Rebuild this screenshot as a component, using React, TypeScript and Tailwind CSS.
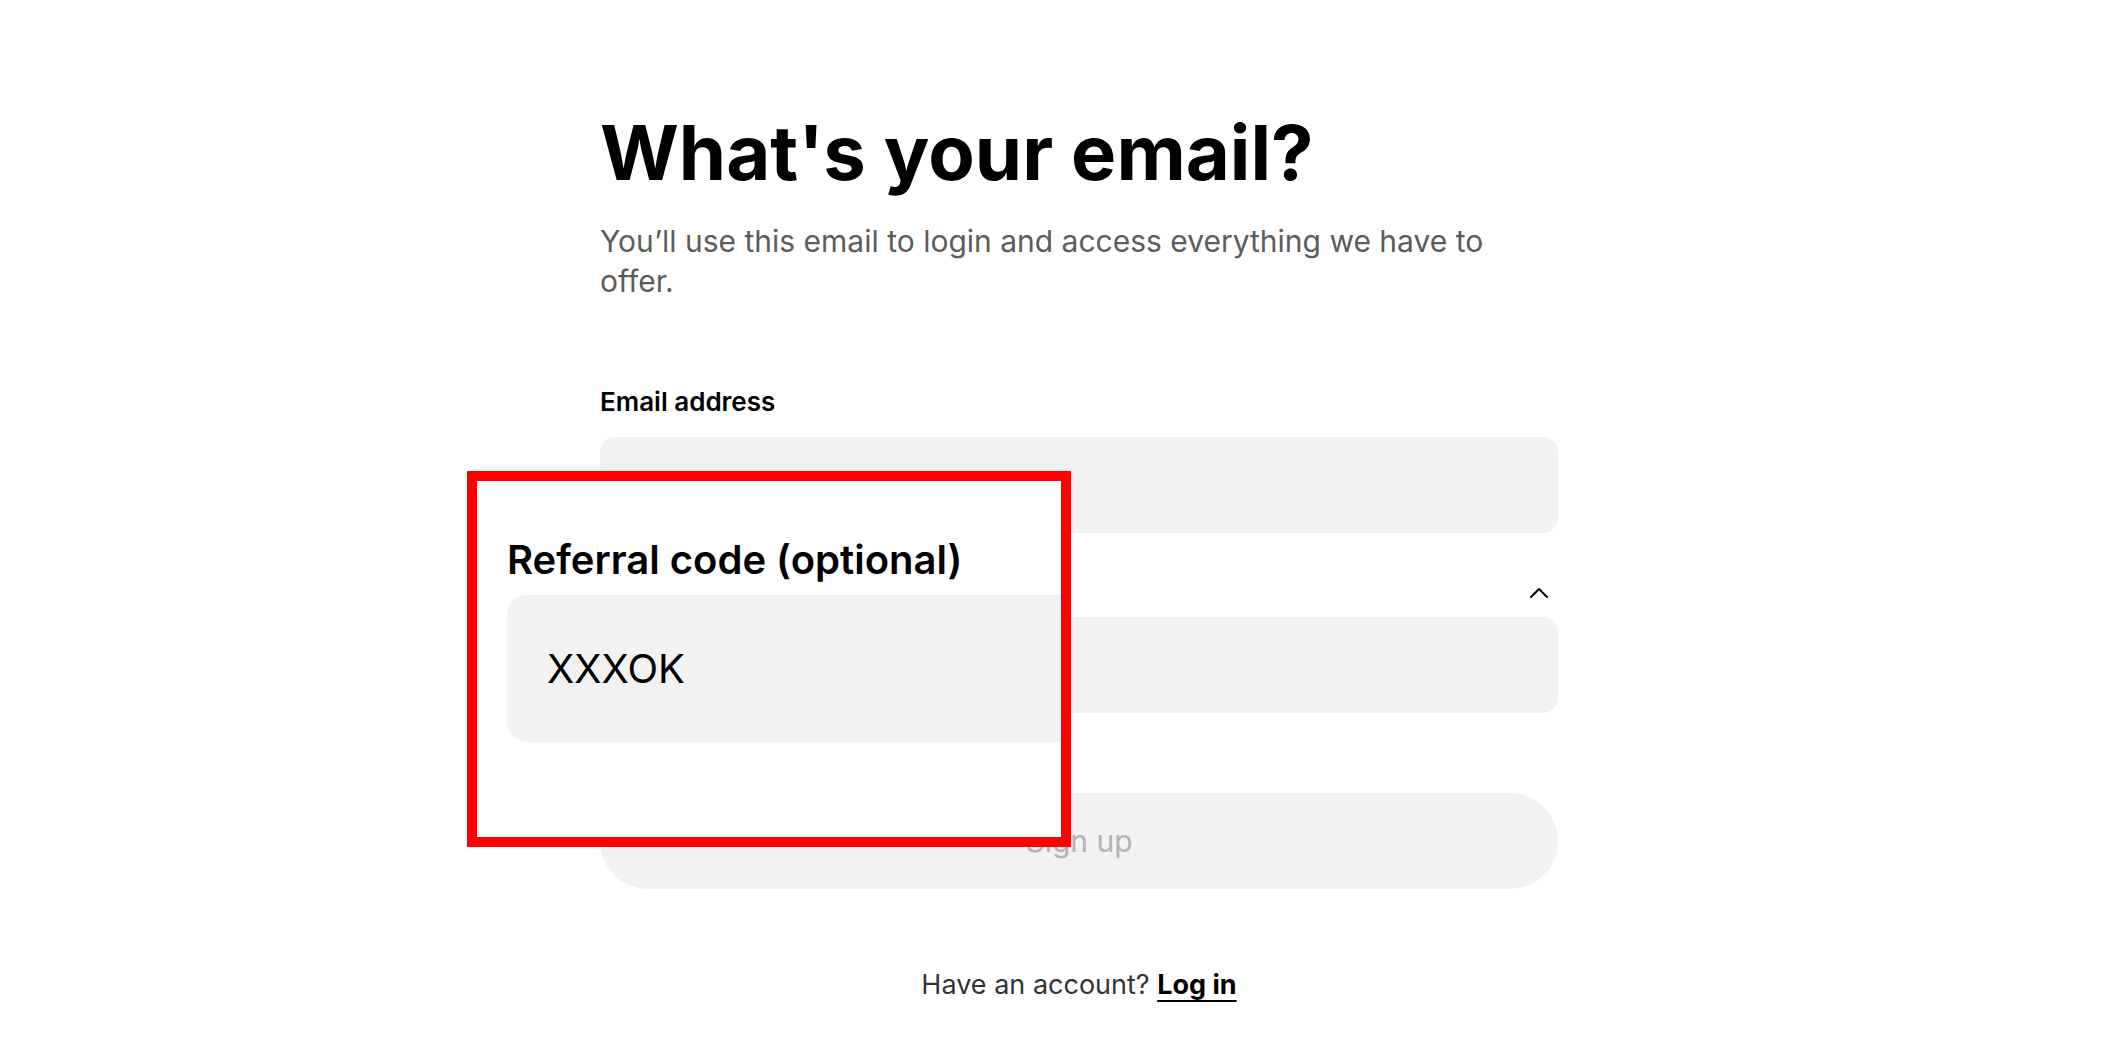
import { ChevronUp } from "lucide-react";

export default function App() {
  return (
    <div className="relative min-h-screen w-full bg-white font-['Inter',sans-serif] text-black">
      <main className="ml-[600px] w-[958px] pt-[114px]">
        <h1 className="text-[76px] font-bold leading-[76px] tracking-normal">What's your email?</h1>
        <p className="mt-[31px] max-w-[900px] text-[30px] leading-[40px] text-[#5c5c5c]">
          You’ll use this email to login and access everything we have to offer.
        </p>

        <form className="mt-[86px] flex flex-col">
          <label className="text-[26px] font-semibold leading-[30px]">Email address</label>
          <div className="mt-[20px] h-[96px] rounded-[15px] bg-[#f2f2f2]" />

          <div className="mt-[45px] flex h-[30px] items-center justify-between pr-[3px]">
            <span className="text-[26px] font-semibold leading-[30px]">Referral code (optional)</span>
            <ChevronUp size={32} strokeWidth={1.5} className="text-black" />
          </div>
          <div className="mt-[9px] h-[96px] rounded-[15px] bg-[#f2f2f2]" />

          <button
            type="button"
            className="mt-[80px] h-[96px] rounded-full bg-[#f2f2f2] text-[30px] text-[#b3b3b3]"
          >
            Sign up
          </button>
        </form>

        <p className="mt-[80px] text-center text-[27px] leading-[32px] text-[#333]">
          Have an account?{" "}
          <a className="font-bold text-black underline decoration-2 underline-offset-[6px]">Log in</a>
        </p>
      </main>

      {/* zoom callout */}
      <div className="absolute left-[467px] top-[471px] h-[376px] w-[604px] overflow-hidden border-[10px] border-[#ff0000] bg-white pl-[30px] pt-[56px]">
        <div className="text-[40px] font-semibold leading-[46px]">Referral code (optional)</div>
        <div className="mt-[12px] flex h-[147px] w-[700px] items-center rounded-[20px] bg-[#f2f2f2] pl-[40px] text-[40px]">
          XXXOK
        </div>
      </div>
    </div>
  );
}
